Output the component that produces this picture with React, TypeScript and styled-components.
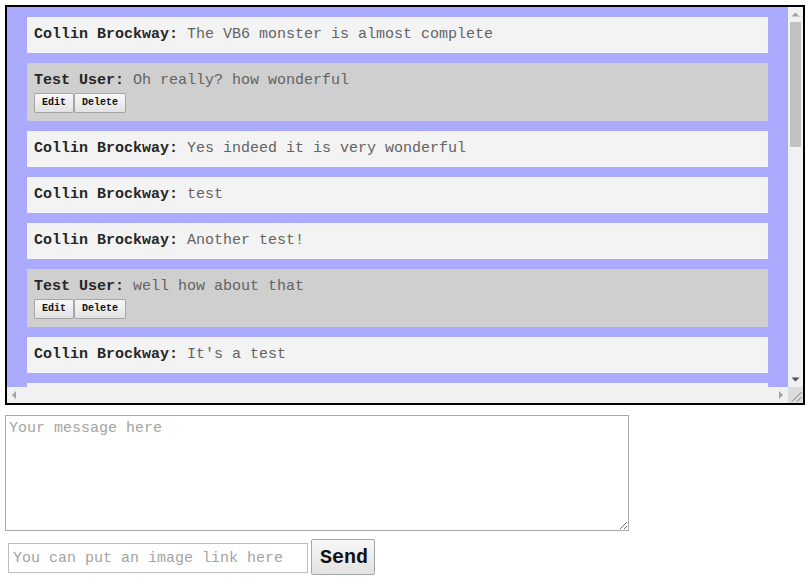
import React from "react";
import styled, { createGlobalStyle } from "styled-components";

const Global = createGlobalStyle`
  html, body { margin: 0; padding: 0; background: #fff; }
  body { padding: 5px; font-family: "Liberation Mono", "Courier New", monospace; }
`;

const Frame = styled.div`
  box-sizing: border-box;
  width: 800px;
  height: 400px;
  border: 2px solid #000;
  display: grid;
  grid-template-columns: 1fr 15px;
  grid-template-rows: 1fr 16px;
  background: #f1f1f1;
`;

const Viewport = styled.div`
  background: #aaaaff;
  overflow: hidden;
  padding-top: 10px;
`;

const VBar = styled.div`
  display: flex;
  flex-direction: column;
  background: #f1f1f1;
`;

const HBar = styled.div`
  display: flex;
  background: #f1f1f1;
`;

const ArrowBox = styled.div<{ $w: number; $h: number }>`
  flex: none;
  width: ${(p) => p.$w}px;
  height: ${(p) => p.$h}px;
  display: flex;
  svg { display: block; }
`;

const VTrack = styled.div`
  flex: 1;
  padding: 0 2px;
`;

const HTrack = styled.div`
  flex: 1;
`;

const Thumb = styled.div`
  height: 125px;
  background: #c1c1c1;
`;

const Corner = styled.div`
  background: #dcdcdc;
  svg { display: block; }
`;

const Message = styled.div<{ $own?: boolean }>`
  margin: 0 20px 10px;
  padding: 9px 7px ${(p) => (p.$own ? "8px" : "10px")};
  background: ${(p) => (p.$own ? "#cfcfcf" : "#f3f3f3")};
  font-size: 15px;
  line-height: 17px;
`;

const Line = styled.div`
  white-space: nowrap;
`;

const Author = styled.b`
  color: #262626;
`;

const Body = styled.span`
  color: #636363;
`;

const Actions = styled.div`
  display: flex;
  margin-top: 4px;
`;

const SmallButton = styled.button`
  box-sizing: border-box;
  height: 20px;
  padding: 0 7px;
  margin: 0;
  font-family: "Liberation Mono", "Courier New", monospace;
  font-weight: bold;
  font-size: 10px;
  line-height: 12px;
  color: #111;
  background: linear-gradient(#f8f8f8, #e2e2e2);
  border: 1px solid #a6a6a6;
  border-radius: 2px;
`;

const Composer = styled.textarea`
  box-sizing: border-box;
  display: block;
  width: 624px;
  height: 116px;
  margin: 10px 0 0;
  padding: 4px 3px 2px;
  font-family: "Liberation Mono", "Courier New", monospace;
  font-size: 15px;
  border: 1px solid #a9a9a9;
  &::placeholder { color: #a3a3a3; }
`;

const SendRow = styled.div`
  display: flex;
  align-items: flex-end;
  gap: 3px;
  margin-top: 8px;
`;

const LinkInput = styled.input`
  box-sizing: border-box;
  width: 300px;
  height: 30px;
  margin: 0 0 2px 3px;
  padding: 1px 4px;
  font-family: "Liberation Mono", "Courier New", monospace;
  font-size: 15px;
  border: 1px solid #bdbdbd;
  &::placeholder { color: #a3a3a3; }
`;

const SendButton = styled.button`
  box-sizing: border-box;
  width: 64px;
  height: 36px;
  padding: 0 8px;
  font-family: "Liberation Mono", "Courier New", monospace;
  font-weight: bold;
  font-size: 20px;
  color: #111;
  background: linear-gradient(#f8f8f8, #e2e2e2);
  border: 1px solid #a6a6a6;
  border-radius: 2px;
`;

type Msg = { author: string; text: string; own?: boolean };

const messages: Msg[] = [
  { author: "Collin Brockway", text: "The VB6 monster is almost complete" },
  { author: "Test User", text: "Oh really? how wonderful", own: true },
  { author: "Collin Brockway", text: "Yes indeed it is very wonderful" },
  { author: "Collin Brockway", text: "test" },
  { author: "Collin Brockway", text: "Another test!" },
  { author: "Test User", text: "well how about that", own: true },
  { author: "Collin Brockway", text: "It's a test" },
  { author: "Collin Brockway", text: "Still testing" },
];

const Arrow = ({ w, h, points, color }: { w: number; h: number; points: string; color: string }) => (
  <ArrowBox $w={w} $h={h}>
    <svg width={w} height={h} viewBox={`0 0 ${w} ${h}`}>
      <polygon points={points} fill={color} />
    </svg>
  </ArrowBox>
);

export default function App() {
  return (
    <>
      <Global />
      <Frame>
        <Viewport>
          {messages.map((m, i) => (
            <Message key={i} $own={m.own}>
              <Line>
                <Author>{m.author}:</Author> <Body>{m.text}</Body>
              </Line>
              {m.own && (
                <Actions>
                  <SmallButton>Edit</SmallButton>
                  <SmallButton>Delete</SmallButton>
                </Actions>
              )}
            </Message>
          ))}
        </Viewport>
        <VBar>
          <Arrow w={15} h={15} points="3.5,9.5 7.5,5.5 11.5,9.5" color="#a3a3a3" />
          <VTrack>
            <Thumb />
          </VTrack>
          <Arrow w={15} h={15} points="3.5,5.5 11.5,5.5 7.5,9.5" color="#505050" />
        </VBar>
        <HBar>
          <Arrow w={15} h={16} points="5,8 9,4 9,12" color="#a3a3a3" />
          <HTrack />
          <Arrow w={15} h={16} points="10,8 6,4 6,12" color="#a3a3a3" />
        </HBar>
        <Corner>
          <svg width="15" height="16" viewBox="0 0 15 16">
            <line x1="4" y1="14.5" x2="13.5" y2="5" stroke="#7a7a7a" strokeWidth="1" />
            <line x1="9" y1="14.5" x2="13.5" y2="10" stroke="#7a7a7a" strokeWidth="1" />
          </svg>
        </Corner>
      </Frame>
      <Composer placeholder="Your message here" />
      <SendRow>
        <LinkInput placeholder="You can put an image link here" />
        <SendButton>Send</SendButton>
      </SendRow>
    </>
  );
}
